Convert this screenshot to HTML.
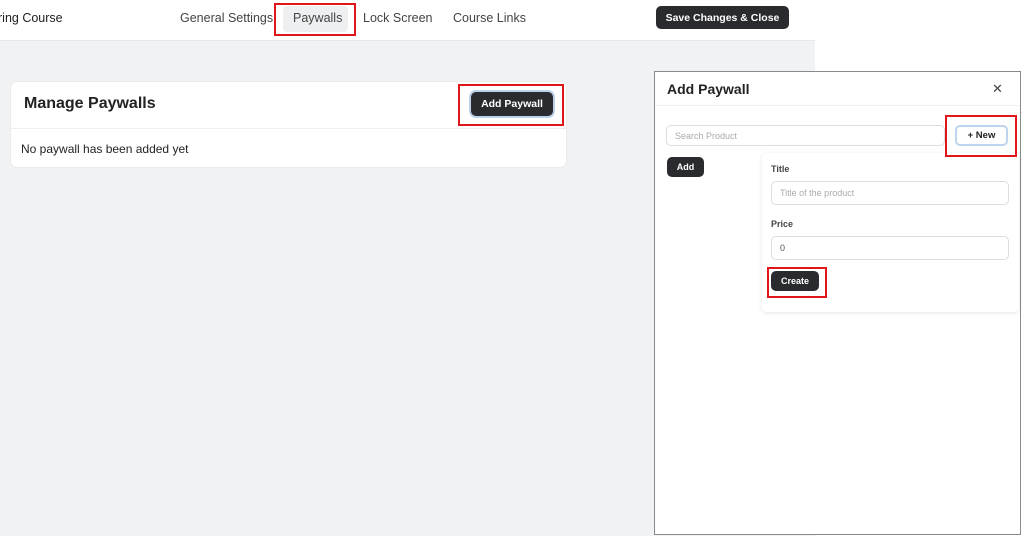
<!DOCTYPE html>
<html><head><style>
*{box-sizing:border-box;margin:0;padding:0}
body{width:1024px;height:536px;position:relative;background:#fff;font-family:"Liberation Sans",sans-serif;color:#222;overflow:hidden}
.a{position:absolute}
.btn{position:absolute;background:#2a2b2f;color:#fff;border-radius:5px;font-size:11px;font-weight:bold;display:flex;align-items:center;justify-content:center}
.red{position:absolute;border:2px solid #e0161b;z-index:5}
.inp{position:absolute;border:1px solid #dcdde0;border-radius:5px;background:#fff;font-size:9px;color:#aaa;padding-left:8px;display:flex;align-items:center}
.nav{position:absolute;top:11px;font-size:12.5px;color:#444}
</style></head><body>
<div class="a" style="left:0;top:41px;width:815px;height:495px;background:#f1f2f4"></div>
<div class="a" style="left:0;top:40px;width:815px;height:1px;background:#e6e7ea"></div>
<div class="a" style="left:-2px;top:11px;font-size:12.5px">ring Course</div>
<div class="nav" style="left:180px">General Settings</div>
<div class="a" style="left:283px;top:6px;width:65px;height:26px;background:#eeeff1;border-radius:4px"></div>
<div class="nav" style="left:293px">Paywalls</div>
<div class="nav" style="left:363px">Lock Screen</div>
<div class="nav" style="left:453px">Course Links</div>
<div class="red" style="left:274px;top:3px;width:82px;height:33px"></div>
<div class="btn" style="left:656px;top:6px;width:133px;height:23px;font-size:10.5px">Save Changes &amp; Close</div>

<div class="a" style="left:10px;top:81px;width:557px;height:87px;background:#fff;border-radius:7px;border:1px solid #eaebed"></div>
<div class="a" style="left:11px;top:128px;width:555px;height:1px;background:#eceef0"></div>
<div class="a" style="left:24px;top:95px;font-size:16px;font-weight:bold;color:#222">Manage Paywalls</div>
<div class="a" style="left:21px;top:142px;font-size:12px;color:#222">No paywall has been added yet</div>
<div class="btn" style="left:471px;top:92px;width:82px;height:24px;box-shadow:0 0 0 2px #bcd2ea;font-size:10.5px">Add Paywall</div>
<div class="red" style="left:458px;top:84px;width:106px;height:42px"></div>

<div class="a" style="left:654px;top:71px;width:367px;height:464px;background:#fff;border:1px solid #8a8a8a"></div>
<div class="a" style="left:667px;top:81px;font-size:14px;font-weight:bold;color:#222">Add Paywall</div>
<div class="a" style="left:992px;top:81px;font-size:13px;color:#444">✕</div>
<div class="a" style="left:655px;top:105px;width:365px;height:1px;background:#eeeff1"></div>
<div class="inp" style="left:666px;top:125px;width:279px;height:21px">Search Product</div>
<div class="a" style="left:955px;top:125px;width:53px;height:21px;border:2px solid #bcd4ee;border-radius:5px;background:#fff;font-size:9.5px;font-weight:bold;display:flex;align-items:center;justify-content:center;color:#222">+ New</div>
<div class="btn" style="left:667px;top:157px;width:37px;height:20px;font-size:9px">Add</div>
<div class="a" style="left:762px;top:153px;width:257px;height:159px;background:#fff;border-radius:5px;box-shadow:0 1px 4px rgba(0,0,0,.1)"></div>
<div class="red" style="left:945px;top:115px;width:72px;height:42px"></div>
<div class="a" style="left:771px;top:164px;font-size:9px;font-weight:bold;color:#444">Title</div>
<div class="inp" style="left:771px;top:181px;width:238px;height:24px">Title of the product</div>
<div class="a" style="left:771px;top:219px;font-size:9px;font-weight:bold;color:#444">Price</div>
<div class="inp" style="left:771px;top:236px;width:238px;height:24px;color:#555">0</div>
<div class="btn" style="left:771px;top:271px;width:48px;height:20px;font-size:9px">Create</div>
<div class="red" style="left:767px;top:267px;width:60px;height:31px"></div>
</body></html>
